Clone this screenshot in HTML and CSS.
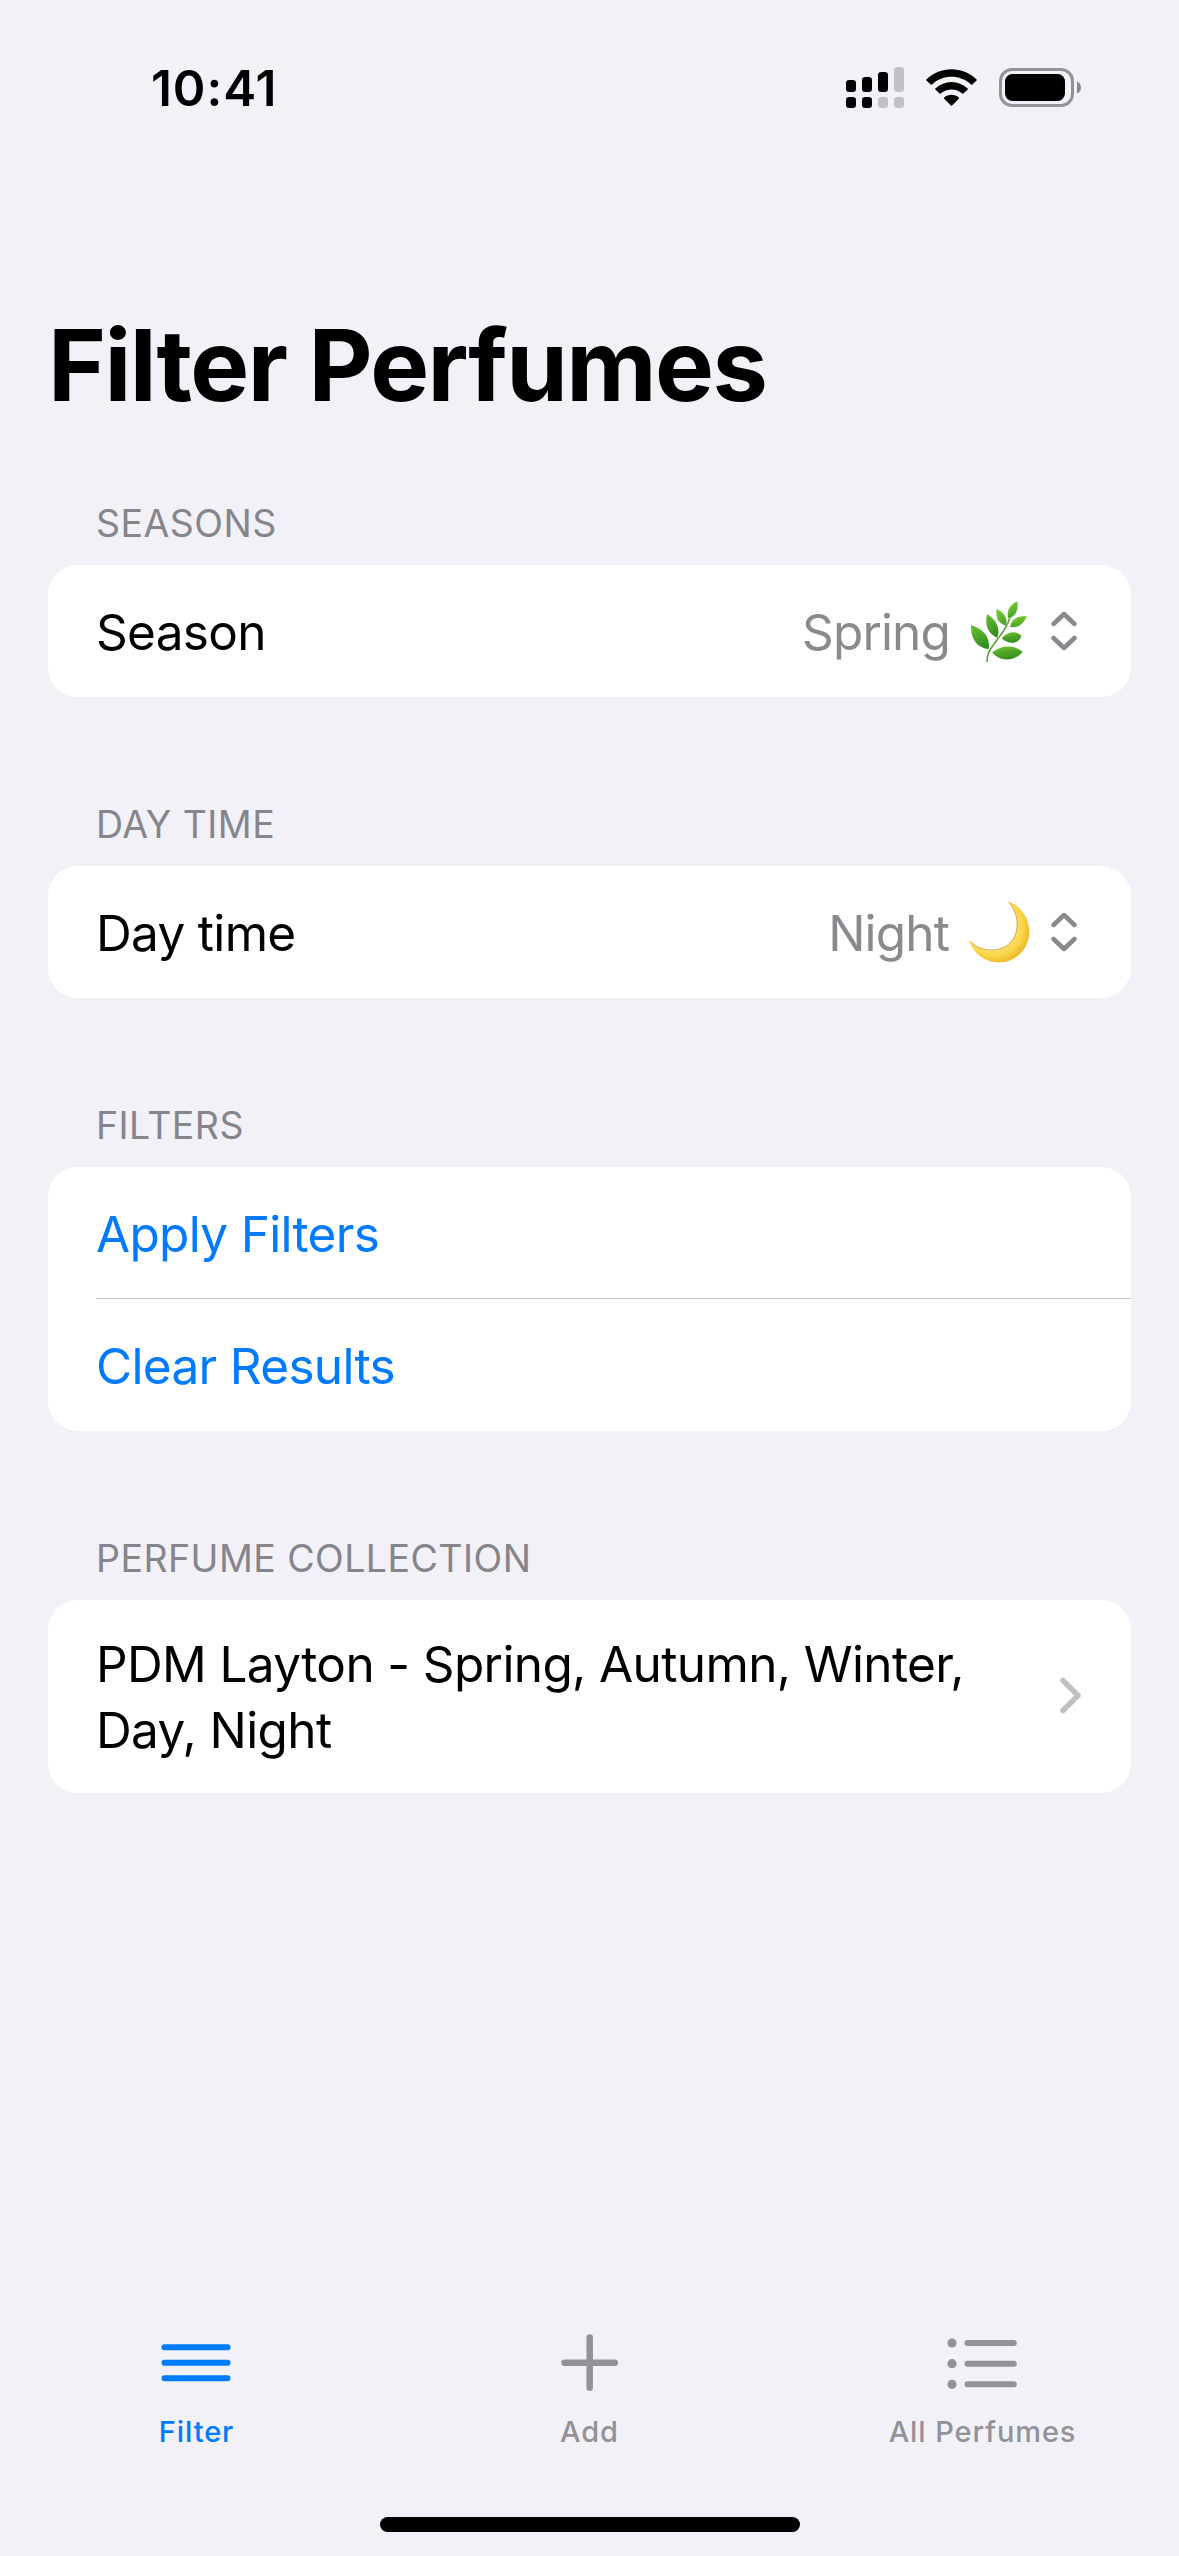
FILE: index.html
```html
<!DOCTYPE html>
<html lang="en">
<head>
<meta charset="utf-8">
<meta name="viewport" content="width=device-width, initial-scale=1">
<title>Filter Perfumes</title>
<link rel="stylesheet" href="styles.css">
</head>
<body>
<div class="screen">
  <header class="status">
    <span class="clock">10:41</span>
    <div class="indicators">
      <svg class="signal" width="58" height="41" viewBox="0 0 58 41" aria-label="Signal">
        <rect x="0" y="13" width="10" height="12" rx="3.2"/>
        <rect x="16" y="10" width="10" height="15" rx="3.2"/>
        <rect x="32" y="5" width="10" height="20" rx="3.2"/>
        <rect class="dim" x="48" y="0" width="10" height="25" rx="3.2"/>
        <rect x="0" y="30" width="10" height="11" rx="3.2"/>
        <rect x="16" y="30" width="10" height="11" rx="3.2"/>
        <rect class="dim" x="32" y="30" width="10" height="11" rx="3.2"/>
        <rect class="dim" x="48" y="30" width="10" height="11" rx="3.2"/>
      </svg>
      <svg class="wifi" width="51" height="37" viewBox="0 0 51 37" aria-label="Wi-Fi">
        <path d="M0.4 10.4C14.5-3.3 36.500-3.300 50.600 10.400Q51 10.900 50.600 11.400L46.300 15.400Q45.700 15.900 45.100 15.400C34 5.100 17 5.100 5.900 15.400Q5.300 15.900 4.700 15.400L0.400 11.400Q0 10.900 0.400 10.400Z"/>
        <path d="M9.300 19.400C18.500 10.700 32.500 10.700 41.700 19.400Q42.200 20 41.700 20.500L37.400 24.600Q36.800 25.100 36.200 24.600C30.200 19.100 20.800 19.100 14.800 24.600Q14.200 25.100 13.600 24.600L9.300 20.500Q8.800 20 9.300 19.400Z"/>
        <path d="M18.200 28.600C22.300 24.800 28.700 24.800 32.800 28.600Q33.300 29.200 32.800 29.700L26.100 36.400Q25.500 36.900 24.900 36.400L18.200 29.700Q17.700 29.200 18.200 28.600Z"/>
      </svg>
      <svg class="battery" width="82" height="39" viewBox="0 0 82 39" aria-label="Battery">
        <rect class="shell" x="1.500" y="1.500" width="72" height="36" rx="11.500"/>
        <rect x="6" y="6" width="60" height="27" rx="7.500"/>
        <path class="nub" d="M78 13.500C80.800 14.700 82 17 82 19.500S80.800 24.300 78 25.500Z"/>
      </svg>
    </div>
  </header>

  <main class="content">
    <h1 class="title">Filter Perfumes</h1>

    <section class="group">
      <h2 class="group-title">SEASONS</h2>
      <div class="card">
        <div class="row">
          <span class="label">Season</span>
          <span class="value">Spring</span>
          <svg class="emoji leaf" width="58" height="63" viewBox="567 148 174 189" role="img" aria-label="Herb">
            <defs>
              <linearGradient id="leafFill" x1="0" y1="0" x2="0.300" y2="1">
                <stop offset="0" stop-color="#6fc52f"/>
                <stop offset="1" stop-color="#348f20"/>
              </linearGradient>
              <linearGradient id="leafTop" x1="0" y1="0" x2="0.300" y2="1">
                <stop offset="0" stop-color="#85d83a"/>
                <stop offset="1" stop-color="#4aa526"/>
              </linearGradient>
            </defs>
            <path class="stem" d="M618 334C618 300 633 290 650 265C668 243 679 226 686 203"/>
            <g fill="url(#leafTop)">
              <path d="M709 152C689 161 675 178 682 203C705 198 713 176 709 152Z"/>
              <path d="M647 174C643 197 649 217 675 225C681 203 669 184 647 174Z"/>
              <path d="M738 197C712 194 693 203 687 228C713 235 728 217 738 197Z"/>
            </g>
            <g fill="url(#leafFill)">
              <path d="M618 191C611 220 619 250 649 261C659 235 646 205 618 191Z"/>
              <path d="M721 254C703 240 681 242 662 263C681 282 716 282 721 254Z"/>
              <path d="M570 223C568 260 585 291 623 296C629 263 609 235 570 223Z"/>
              <path d="M725 303C697 281 661 284 634 305C654 334 700 334 725 303Z"/>
            </g>
            <path class="vein" d="M705 160L684 200M650 180L673 221M730 200L690 226M621 199L647 257M714 256L665 263M576 230L620 291M717 303L638 305"/>
          </svg>
          <svg class="updown" width="26" height="40" viewBox="0 0 26 40" aria-hidden="true">
            <path d="M2.500 13L13 3L23.500 13M2.500 27L13 37L23.500 27"/>
          </svg>
        </div>
      </div>
    </section>

    <section class="group">
      <h2 class="group-title">DAY TIME</h2>
      <div class="card">
        <div class="row">
          <span class="label">Day time</span>
          <span class="value">Night</span>
          <svg class="emoji moon" width="61" height="62" viewBox="567 154 183 186" role="img" aria-label="Crescent moon">
            <defs>
              <radialGradient id="moonFill" gradientUnits="userSpaceOnUse" cx="640" cy="230" r="112">
                <stop offset="0.600" stop-color="#f7e06a"/>
                <stop offset="0.800" stop-color="#f9d548"/>
                <stop offset="1" stop-color="#efb92c"/>
              </radialGradient>
            </defs>
            <path fill="url(#moonFill)" d="M684 155C724 170 748 206 748 247C748 298 707 338 657 338C613 338 579 311 567 271C587 294 608 302 635 302C681 302 712 270 712 224C712 198 703 175 684 155Z"/>
            <path class="rim" d="M686 158C703 178 711.500 199 711.500 224C711.500 269 681 301 635 301C609 301 590 294 571 275"/>
          </svg>
          <svg class="updown" width="26" height="40" viewBox="0 0 26 40" aria-hidden="true">
            <path d="M2.500 13L13 3L23.500 13M2.500 27L13 37L23.500 27"/>
          </svg>
        </div>
      </div>
    </section>

    <section class="group">
      <h2 class="group-title">FILTERS</h2>
      <div class="card">
        <div class="row link"><span class="label">Apply Filters</span></div>
        <div class="row link"><span class="label">Clear Results</span></div>
      </div>
    </section>

    <section class="group">
      <h2 class="group-title">PERFUME COLLECTION</h2>
      <div class="card">
        <div class="row tall">
          <span class="label">PDM Layton - Spring, Autumn, Winter, Day, Night</span>
          <svg class="disclosure" width="22" height="37" viewBox="0 0 22 37" aria-hidden="true">
            <path d="M4 3.500L19 18.500L4 33.500"/>
          </svg>
        </div>
      </div>
    </section>
  </main>

  <nav class="tabs">
    <a class="tab active">
      <svg width="72" height="60" viewBox="0 0 72 60" aria-hidden="true">
        <path d="M3.500 14.200H66.500M3.500 29.700H66.500M3.500 45.200H66.500"/>
      </svg>
      <span>Filter</span>
    </a>
    <a class="tab">
      <svg class="plus" width="72" height="60" viewBox="0 0 72 60" aria-hidden="true">
        <path d="M35.700 4.600V54.800M10.600 29.700H60.800"/>
      </svg>
      <span>Add</span>
    </a>
    <a class="tab">
      <svg width="72" height="60" viewBox="0 0 72 60" aria-hidden="true">
        <path d="M20.500 10H66.800M20.500 30.700H66.800M20.500 51.300H66.800"/>
        <circle cx="5" cy="10" r="4.600"/>
        <circle cx="5" cy="30.700" r="4.600"/>
        <circle cx="5" cy="51.300" r="4.600"/>
      </svg>
      <span>All Perfumes</span>
    </a>
  </nav>
  <div class="home-indicator"></div>
</div>
</body>
</html>
```
FILE: styles.css
```css
* {
  box-sizing: border-box;
}

body {
  margin: 0;
  background: #f2f1f7;
  color: #000;
  font-family: Inter, "Liberation Sans", sans-serif;
}

svg {
  display: block;
  flex: none;
}

.screen {
  display: flex;
  flex-direction: column;
  width: 1179px;
  height: 2556px;
  overflow: hidden;
}

/* Status bar */
.status {
  display: flex;
  justify-content: space-between;
  align-items: flex-start;
  height: 305px;
  padding: 58px 98px 0 151px;
}

.clock {
  font-size: 49.5px;
  font-weight: 600;
  line-height: 60px;
  letter-spacing: 0.93px;
}

.indicators {
  display: flex;
  align-items: flex-start;
  padding-top: 9px;
}

.signal .dim {
  fill: #c1c0c5;
}

.wifi {
  margin: 2px 22px 0;
}

.battery {
  margin-top: 1px;
}

.battery .shell {
  fill: none;
  stroke: #939297;
  stroke-width: 3;
}

.battery .nub {
  fill: #88878b;
}

/* Form */
.content {
  padding: 0 48px;
}

.title {
  margin: 0 0 74px;
  font-size: 99px;
  font-weight: 700;
  line-height: 120px;
  letter-spacing: -1.55px;
}

.group + .group {
  margin-top: 103px;
}

.group-title {
  height: 66px;
  margin: 0;
  padding: 1px 48px 0;
  color: #86858b;
  font-size: 37.5px;
  font-weight: 400;
  line-height: 48px;
  letter-spacing: 0.45px;
}

.card {
  border-radius: 30px;
  background: #fff;
}

.row {
  display: flex;
  align-items: center;
  height: 132px;
  padding: 0 50px 0 48px;
  font-size: 49.5px;
  line-height: 66px;
  letter-spacing: -0.68px;
}

.row .label {
  flex: 1;
  padding-top: 2px;
}

.row + .row {
  background: linear-gradient(#c6c6c8, #c6c6c8) 48px 0 / 100% 1px no-repeat;
}

.card .row + .row {
  margin-top: -1px;
  height: 133px;
}

.link {
  color: #007aff;
}

.value {
  padding-top: 1px;
  color: #8a8a8e;
  letter-spacing: -0.85px;
}

.emoji {
  margin-left: 20px;
}

.updown {
  margin-right: 4px;
  margin-left: auto;
  fill: none;
  stroke: #8a8a8e;
  stroke-width: 4.5;
  stroke-linecap: round;
  stroke-linejoin: round;
}

.leaf + .updown {
  margin-left: 23px;
}

.moon + .updown {
  margin-left: 21px;
}

.leaf .stem {
  fill: none;
  stroke: #5aa83a;
  stroke-width: 5;
}

.leaf .vein {
  fill: none;
  stroke: #2f8420;
  stroke-width: 1.5;
  opacity: 0.5;
}

.moon .rim {
  fill: none;
  stroke: #c79a2e;
  stroke-width: 2.5;
}

.tall {
  align-items: flex-start;
  height: 193px;
  padding-top: 30px;
  letter-spacing: -0.62px;
}

.tall .label {
  flex: none;
  width: 900px;
  padding-top: 1px;
}

.disclosure {
  align-self: flex-start;
  margin: 47px 0 0 auto;
  fill: none;
  stroke: #c1c1c4;
  stroke-width: 5.5;
  stroke-linecap: round;
  stroke-linejoin: round;
}

/* Tab bar */
.tabs {
  display: grid;
  grid-template-columns: repeat(3, 1fr);
  margin-top: auto;
  margin-bottom: 67px;
}

.tab {
  display: flex;
  flex-direction: column;
  align-items: center;
  gap: 21px;
  color: #929298;
  font-size: 29px;
  font-weight: 500;
  line-height: 36px;
  letter-spacing: 0.9px;
}

.tab svg {
  fill: currentColor;
  stroke: currentColor;
  stroke-width: 6;
  stroke-linecap: round;
}

.tab circle {
  stroke: none;
}

.tab .plus {
  stroke-width: 6.5;
}

.active {
  color: #007aff;
}

.home-indicator {
  align-self: center;
  width: 420px;
  height: 15px;
  margin-bottom: 24px;
  border-radius: 8px;
  background: #000;
}
```
